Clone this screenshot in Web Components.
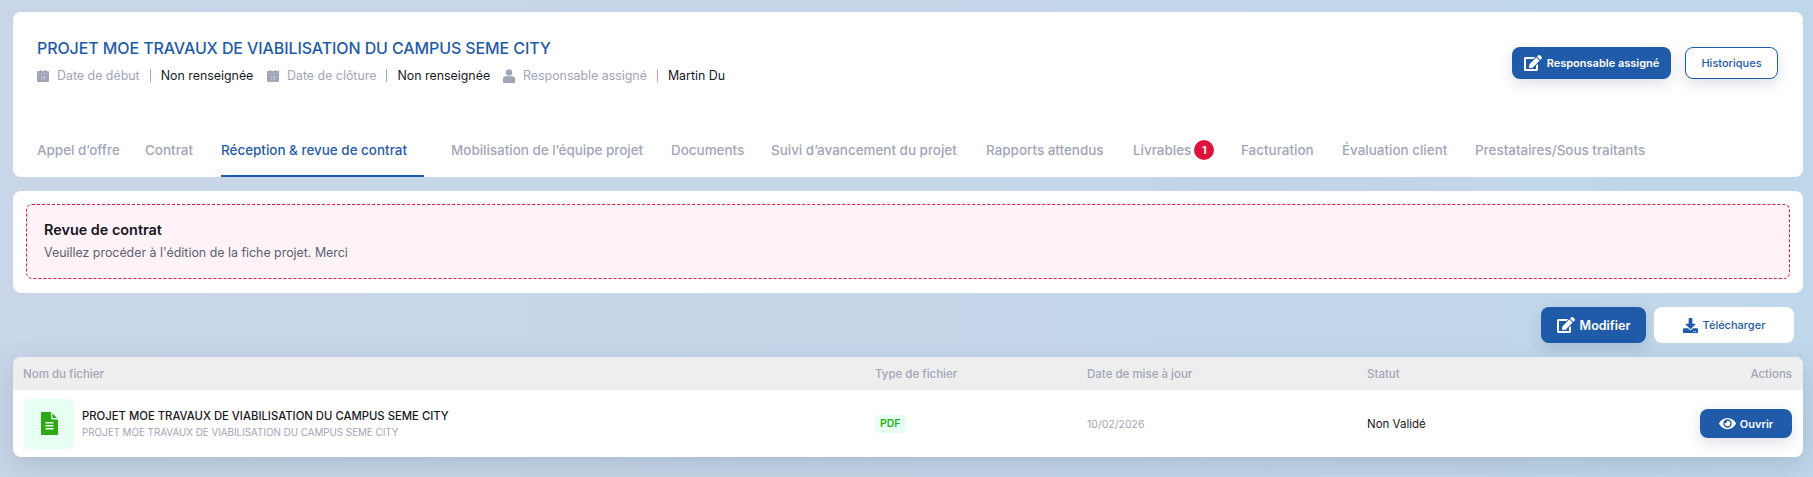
<!DOCTYPE html>
<html lang="fr">
<head>
<meta charset="utf-8">
<title>Revue de contrat</title>
<style>
  html, body { margin: 0; height: 100%; }
  body {
    width: 1813px;
    height: 477px;
    overflow: hidden;
    background: linear-gradient(90deg, #c9d6e8 0%, #c4d6e9 60%, #bfd7ea 100%);
    font-family: Inter, "Liberation Sans", sans-serif;
  }
</style>
</head>
<body>

<template id="icon-edit"><svg viewBox="0 0 576 512" width="100%" height="100%" fill="currentColor"><path d="M402.6 83.2l90.2 90.2c3.8 3.8 3.8 10 0 13.8L274.4 405.6l-92.8 10.3c-12.4 1.4-22.9-9.1-21.5-21.5l10.3-92.8L388.8 83.2c3.8-3.8 10-3.8 13.8 0zm162-22.9l-48.8-48.8c-15.2-15.2-39.9-15.2-55.2 0l-35.4 35.4c-3.8 3.8-3.8 10 0 13.8l90.2 90.2c3.8 3.8 10 3.8 13.8 0l35.4-35.4c15.2-15.3 15.2-40 0-55.2zM384 346.2V448H64V128h229.8c3.2 0 6.2-1.3 8.5-3.5l40-40c7.6-7.6 2.2-20.5-8.5-20.5H48C21.5 64 0 85.5 0 112v352c0 26.5 21.5 48 48 48h352c26.5 0 48-21.5 48-48V306.2c0-10.7-12.9-16-20.5-8.5l-40 40c-2.2 2.3-3.5 5.3-3.5 8.5z"/></svg></template>
<template id="icon-eye"><svg viewBox="0 0 576 512" width="100%" height="100%" fill="currentColor"><path d="M572.52 241.4C518.29 135.59 410.93 64 288 64S57.68 135.64 3.48 241.41a32.35 32.35 0 0 0 0 29.19C57.71 376.41 165.07 448 288 448s230.32-71.64 284.52-177.41a32.35 32.35 0 0 0 0-29.19zM288 400a144 144 0 1 1 144-144 143.93 143.93 0 0 1-144 144zm0-240a95.31 95.31 0 0 0-25.31 3.79 47.85 47.85 0 0 1-66.9 66.9A95.78 95.78 0 1 0 288 160z"/></svg></template>
<template id="icon-download"><svg viewBox="0 0 512 512" width="100%" height="100%" fill="currentColor"><path d="M216 0h80c13.3 0 24 10.7 24 24v168h87.7c17.8 0 26.7 21.5 14.1 34.1L269.7 378.3c-7.5 7.5-19.8 7.5-27.3 0L90.1 226.1c-12.6-12.6-3.7-34.1 14.1-34.1H192V24c0-13.3 10.7-24 24-24zm296 376v112c0 13.3-10.7 24-24 24H24c-13.3 0-24-10.7-24-24V376c0-13.3 10.7-24 24-24h146.7l49 49c20.1 20.1 52.5 20.1 72.6 0l49-49H488c13.3 0 24 10.7 24 24zm-124 88c0-11-9-20-20-20s-20 9-20 20 9 20 20 20 20-9 20-20zm64 0c0-11-9-20-20-20s-20 9-20 20 9 20 20 20 20-9 20-20z"/></svg></template>
<template id="icon-calendar"><svg viewBox="0 0 12 12" width="100%" height="100%"><path fill="currentColor" d="M1.2 1H3V0h1v1h4V0h1v1h1.8c.7 0 1.2.5 1.2 1.2v8.6c0 .7-.5 1.2-1.2 1.2H1.2C.5 12 0 11.5 0 10.8V2.2C0 1.500.5 1 1.2 1z"/><path fill="#fff" opacity=".4" d="M.9 3.500h10.200V4H.9zM4 6h1v3.800H4zM6 6h2.200v2.200H7v.4h1.200v1.200H6v-.6h1.400v-.6H6z"/></svg></template>
<template id="icon-user"><svg viewBox="0 0 12 14" width="100%" height="100%" fill="currentColor"><circle cx="6" cy="3.400" r="3.200"/><path d="M2.600 7.200h6.800c1.400 0 2.600 1.200 2.600 2.600V13c0 .6-.4 1-1 1H1c-.6 0-1-.4-1-1V9.800c0-1.400 1.200-2.600 2.600-2.600z"/></svg></template>
<template id="icon-file"><svg viewBox="0 0 17 23" width="100%" height="100%"><path fill="#2fa815" d="M1 0H10V6c0 .8.6 1.400 1.400 1.400H17V22c0 .6-.4 1-1 1H1c-.6 0-1-.4-1-1V1C0 .4.400 0 1 0z"/><path fill="#2fa815" d="M11.400 1.200L16 6H11.400z"/><path fill="#eaf7e6" d="M4.500 10h8v1.400h-8zM4.500 13h8v1.400h-8zM4.500 16h8v1.400h-8z"/></svg></template>

<script>
  // shared helper, clones one of the icon templates above
  function iconNode(name) {
    return document.getElementById('icon-' + name).content.cloneNode(true);
  }

  class AppIcon extends HTMLElement {
    constructor() {
      super();
      this.attachShadow({ mode: 'open' });
    }
    connectedCallback() {
      const size = this.getAttribute('size') || '14';
      const h = this.getAttribute('height') || size;
      this.shadowRoot.innerHTML = `
        <style>
          :host { display: inline-flex; flex: none; width: ${size}px; height: ${h}px; }
          svg { display: block; }
        </style>`;
      this.shadowRoot.appendChild(iconNode(this.getAttribute('name')));
    }
  }
  customElements.define('app-icon', AppIcon);

  class AppButton extends HTMLElement {
    constructor() {
      super();
      this.attachShadow({ mode: 'open' });
      this.shadowRoot.innerHTML = `
        <style>
          :host {
            display: inline-flex;
            align-items: center;
            justify-content: center;
            box-sizing: border-box;
            border-radius: 8px;
            font-weight: 600;
            white-space: nowrap;
            background: #1f5ba9;
            color: #fff;
            box-shadow: 0 5px 14px rgba(40, 60, 90, 0.16);
          }
          :host([variant="outline"]) {
            background: #fff;
            color: #1f5ba9;
            border: 1px solid #1f5ba9;
            font-weight: 500;
          }
          :host([variant="plain"]) {
            background: #fff;
            color: #1f5ba9;
            font-weight: 500;
            box-shadow: none;
          }
        </style>
        <slot></slot>`;
    }
  }
  customElements.define('app-button', AppButton);

  class MetaItem extends HTMLElement {
    constructor() {
      super();
      this.attachShadow({ mode: 'open' });
      this.shadowRoot.innerHTML = `
        <style>
          :host { display: inline-flex; align-items: center; font-size: 12.4px; white-space: nowrap; color: #a1a5b7; }
          .icon { display: inline-flex; margin-right: 8px; color: #a1a5b7; }
          .sep { width: 1px; height: 13px; background: var(--sep, #9aa7bb); margin: 0 10px; }
          .val { color: #17181f; }
        </style>
        <span class="icon"><slot name="icon"></slot></span>
        <slot name="label"></slot>
        <span class="sep"></span>
        <span class="val"><slot></slot></span>`;
    }
  }
  customElements.define('meta-item', MetaItem);

  class ProjectTab extends HTMLElement {
    constructor() {
      super();
      this.attachShadow({ mode: 'open' });
      this.shadowRoot.innerHTML = `
        <style>
          :host {
            display: flex;
            align-items: center;
            box-sizing: border-box;
            height: 52px;
            padding-bottom: 1px;
            font-size: 13.45px;
            font-weight: 500;
            white-space: nowrap;
            color: #a1a5b7;
            border-bottom: 2px solid transparent;
          }
          :host([active]) { color: #1f5ba9; border-bottom-color: #1f5ba9; width: 203px; }
        </style>
        <slot></slot>`;
    }
  }
  customElements.define('project-tab', ProjectTab);

  class ProjectHeader extends HTMLElement {
    constructor() {
      super();
      this.attachShadow({ mode: 'open' });
      this.shadowRoot.innerHTML = `
        <style>
          :host {
            display: block;
            box-sizing: border-box;
            height: 165px;
            background: #fff;
            border-radius: 8px;
            padding: 25px 25px 0 24px;
          }
          .top { display: flex; justify-content: space-between; height: 88px; }
          h1 { margin: 0 0 9px; font-size: 16px; line-height: 22px; font-weight: 500; letter-spacing: -0.1px; color: #1f5ba9; white-space: nowrap; }
          .meta { display: grid; grid-template-columns: 230px 236px auto; }
          .actions { display: flex; gap: 14px; padding-top: 10px; }
          .tabs { display: grid; grid-template-columns: 108px 76px 230px 220px 100px 215px 147px 108px 101px 133px auto; height: 52px; }
        </style>
        <div class="top">
          <div>
            <h1><slot name="title"></slot></h1>
            <div class="meta"><slot name="meta"></slot></div>
          </div>
          <div class="actions"><slot name="actions"></slot></div>
        </div>
        <div class="tabs"><slot name="tabs"></slot></div>`;
    }
  }
  customElements.define('project-header', ProjectHeader);

  class NoticeCard extends HTMLElement {
    constructor() {
      super();
      this.attachShadow({ mode: 'open' });
      this.shadowRoot.innerHTML = `
        <style>
          :host {
            display: block;
            box-sizing: border-box;
            height: 102px;
            background: #fff;
            border-radius: 8px;
            padding: 13px;
          }
          .box {
            box-sizing: border-box;
            height: 75px;
            background: #fff3f7;
            border: 1px dashed #e3173e;
            border-radius: 6px;
            padding: 15px 17px;
          }
          .title { font-size: 14.4px; line-height: 20px; font-weight: 600; color: #14151f; }
          .text { margin-top: 4px; font-size: 12.4px; line-height: 18px; color: #5a6072; }
        </style>
        <div class="box">
          <div class="title"><slot name="title"></slot></div>
          <div class="text"><slot></slot></div>
        </div>`;
    }
  }
  customElements.define('notice-card', NoticeCard);

  class FileTable extends HTMLElement {
    constructor() {
      super();
      this.attachShadow({ mode: 'open' });
      this.shadowRoot.innerHTML = `
        <style>
          :host {
            display: block;
            background: #fff;
            border-radius: 8px;
            box-shadow: 0 8px 26px rgba(40, 60, 90, 0.17);
            overflow: hidden;
          }
          .row {
            display: grid;
            grid-template-columns: 852px 212px 280px 1fr 120px;
            align-items: center;
            padding: 0 11px 0 10px;
          }
          .head { height: 33px; background: #eee; font-size: 11.5px; font-weight: 500; color: #a1a5b7; }
          .body { height: 67px; }
          .body .mid { padding-bottom: 3px; }
          .end { text-align: right; justify-self: end; }
        </style>
        <div class="row head">
          <div>Nom du fichier</div>
          <div>Type de fichier</div>
          <div>Date de mise à jour</div>
          <div>Statut</div>
          <div class="end">Actions</div>
        </div>
        <div class="row body">
          <div><slot name="file"></slot></div>
          <div class="mid"><slot name="type"></slot></div>
          <div class="mid"><slot name="date"></slot></div>
          <div class="mid"><slot name="status"></slot></div>
          <div class="end"><slot name="action"></slot></div>
        </div>`;
    }
  }
  customElements.define('file-table', FileTable);

  class FileCell extends HTMLElement {
    constructor() {
      super();
      this.attachShadow({ mode: 'open' });
      this.shadowRoot.innerHTML = `
        <style>
          :host { display: flex; align-items: center; gap: 8px; white-space: nowrap; margin-left: 1px; }
          .thumb { width: 50px; height: 50px; border-radius: 6px; background: #e7fff3; display: flex; align-items: center; justify-content: center; }
          .texts { padding-top: 2px; }
          .name { font-size: 11.3px; line-height: 17px; font-weight: 500; color: #17181f; }
          .sub { font-size: 9.8px; line-height: 16px; color: #a1a5b7; }
        </style>
        <div class="thumb"><slot name="icon"></slot></div>
        <div class="texts">
          <div class="name"><slot name="name"></slot></div>
          <div class="sub"><slot name="sub"></slot></div>
        </div>`;
    }
  }
  customElements.define('file-cell', FileCell);

  class ContractPage extends HTMLElement {
    constructor() {
      super();
      this.attachShadow({ mode: 'open' });
      this.shadowRoot.innerHTML = `
        <style>
          :host {
            display: flex;
            flex-direction: column;
            box-sizing: border-box;
            width: 1813px;
            padding: 12px 10px 0 13px;
          }
          .tools { display: flex; justify-content: flex-end; gap: 8px; height: 36px; margin: 14px 0; padding-right: 9px; }
          .gap { height: 14px; }
        </style>
        <slot name="header"></slot>
        <div class="gap"></div>
        <slot name="notice"></slot>
        <div class="tools"><slot name="tools"></slot></div>
        <slot name="table"></slot>`;
    }
  }
  customElements.define('contract-page', ContractPage);
</script>

<contract-page>
  <project-header slot="header">
    <span slot="title">PROJET MOE TRAVAUX DE VIABILISATION DU CAMPUS SEME CITY</span>

    <meta-item slot="meta"><app-icon slot="icon" name="calendar" size="12" height="12"></app-icon><span slot="label">Date de début</span>Non renseignée</meta-item>
    <meta-item slot="meta"><app-icon slot="icon" name="calendar" size="12" height="12"></app-icon><span slot="label">Date de clôture</span>Non renseignée</meta-item>
    <meta-item slot="meta" style="--sep:#e39aa8"><app-icon slot="icon" name="user" size="12" height="14"></app-icon><span slot="label">Responsable assigné</span>Martin Du</meta-item>

    <app-button slot="actions" style="width:159px;height:32px;font-size:11px;gap:5px"><app-icon name="edit" size="18" height="16"></app-icon>Responsable assigné</app-button>
    <app-button slot="actions" variant="outline" style="width:93px;height:32px;font-size:11px">Historiques</app-button>

    <project-tab slot="tabs">Appel d’offre</project-tab>
    <project-tab slot="tabs">Contrat</project-tab>
    <project-tab slot="tabs" active>Réception &amp; revue de contrat</project-tab>
    <project-tab slot="tabs">Mobilisation de l’équipe projet</project-tab>
    <project-tab slot="tabs">Documents</project-tab>
    <project-tab slot="tabs">Suivi d’avancement du projet</project-tab>
    <project-tab slot="tabs">Rapports attendus</project-tab>
    <project-tab slot="tabs">Livrables <span style="display:inline-flex;align-items:center;justify-content:center;width:20px;height:20px;margin-left:3px;border-radius:50%;background:#dc143c;color:#fff;font-size:10px;font-weight:700">1</span></project-tab>
    <project-tab slot="tabs">Facturation</project-tab>
    <project-tab slot="tabs">Évaluation client</project-tab>
    <project-tab slot="tabs">Prestataires/Sous traitants</project-tab>
  </project-header>

  <notice-card slot="notice">
    <span slot="title">Revue de contrat</span>
    Veuillez procéder à l'édition de la fiche projet. Merci
  </notice-card>

  <app-button slot="tools" style="width:105px;height:36px;font-size:12.5px;gap:5px"><app-icon name="edit" size="18" height="16"></app-icon>Modifier</app-button>
  <app-button slot="tools" variant="plain" style="width:140px;height:36px;font-size:11px;gap:5px"><app-icon name="download" size="15"></app-icon>Télécharger</app-button>

  <file-table slot="table">
    <file-cell slot="file">
      <app-icon slot="icon" name="file" size="17" height="23"></app-icon>
      <span slot="name">PROJET MOE TRAVAUX DE VIABILISATION DU CAMPUS SEME CITY</span>
      <span slot="sub">PROJET MOE TRAVAUX DE VIABILISATION DU CAMPUS SEME CITY</span>
    </file-cell>
    <span slot="type" style="display:inline-block;padding:0 5px;border-radius:4px;background:#e7fff3;color:#2fae14;font-size:10.5px;font-weight:600;line-height:18px">PDF</span>
    <span slot="date" style="font-size:10.5px;color:#a1a5b7">10/02/2026</span>
    <span slot="status" style="font-size:11.5px;color:#17181f">Non Validé</span>
    <app-button slot="action" style="width:92px;height:29px;font-size:11px;gap:4px"><app-icon name="eye" size="17" height="15"></app-icon>Ouvrir</app-button>
  </file-table>
</contract-page>

</body>
</html>
